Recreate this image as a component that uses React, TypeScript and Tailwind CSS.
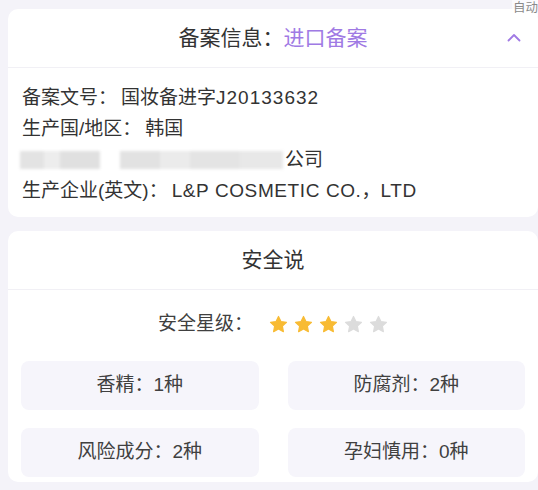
import React from "react";

const font = { fontFamily: '"Liberation Sans", "Noto Sans CJK SC", "Noto Sans", sans-serif' };

function Star({ on }: { on: boolean }) {
  return (
    <svg width="19" height="19" viewBox="0 0 24 24">
      <path
        d="M12 1.8l3.1 6.5 7 .9-5.2 4.9 1.3 7-6.2-3.4-6.2 3.4 1.3-7L1.9 9.2l7-.9z"
        fill={on ? "#f8bb34" : "#dcdcdc"}
        stroke={on ? "#f8bb34" : "#dcdcdc"}
        strokeWidth="1.5"
        strokeLinejoin="round"
      />
    </svg>
  );
}

function Box({ children }: { children: React.ReactNode }) {
  return (
    <div className="h-[49px] rounded-[8px] bg-[#f6f5fb] flex items-center justify-center text-[19px] text-[#404040]">
      {children}
    </div>
  );
}

function Colon() {
  return <span className="mr-[4px]">：</span>;
}

export default function App() {
  return (
    <div
      className="relative w-[538px] h-[490px] overflow-hidden bg-[#f4f3f9] pl-[8px] pt-[9px]"
      style={font}
    >
      <div className="absolute right-0 top-0 text-[12.5px] leading-[16px] text-[#8a8a8a] bg-white/60 pl-[1px]">
        自动
      </div>

      {/* Card 1 */}
      <div className="w-[530px] bg-white rounded-[10px]">
        <div className="h-[59px] border-b border-[#f1f0f5] grid grid-cols-[1fr_auto_1fr] items-center">
          <div />
          <div className="text-[21px] text-[#333333]">
            备案信息：<span className="text-[#a07ae4]">进口备案</span>
          </div>
          <div className="flex justify-end pr-[16px]">
            <svg width="16" height="16" viewBox="0 0 16 16">
              <path d="M2.5 10.5L8 5l5.5 5.5" fill="none" stroke="#a07ae4" strokeWidth="1.8" strokeLinecap="round" strokeLinejoin="round" />
            </svg>
          </div>
        </div>
        <div className="pl-[14px] pt-[14px] pb-[11px] text-[19px] leading-[31px] text-[#333333]">
          <div>
            备案文号<Colon />国妆备进字<span className="tracking-[1px]">J20133632</span>
          </div>
          <div>
            生产国/地区<Colon />韩国
          </div>
          <div className="flex items-center h-[31px]">
            <div className="flex items-center blur-[1.5px] ml-[-2px]">
              <div className="w-[24px] h-[18px] bg-[#e3e3e3]" />
              <div className="w-[16px] h-[18px] bg-[#ededed]" />
              <div className="w-[40px] h-[18px] bg-[#e0e0e0]" />
              <div className="w-[20px] h-[18px] bg-white" />
              <div className="w-[40px] h-[18px] bg-[#e2e2e2]" />
              <div className="w-[30px] h-[18px] bg-[#ebebeb]" />
              <div className="w-[50px] h-[18px] bg-[#e4e4e4]" />
              <div className="w-[43px] h-[18px] bg-[#e8e8e8]" />
            </div>
            <span className="ml-[2px]">公司</span>
          </div>
          <div>
            生产企业(英文)<Colon />
            <span className="tracking-[0.6px]">L&amp;P COSMETIC CO.</span>，<span className="tracking-[0.6px]">LTD</span>
          </div>
        </div>
      </div>

      {/* Card 2 */}
      <div className="w-[530px] mt-[14px] bg-white rounded-[10px] pb-[5px]">
        <div className="h-[59px] border-b border-[#f1f0f5] flex items-center justify-center text-[21px] text-[#333333]">
          安全说
        </div>
        <div className="mt-[19px] h-[30px] flex items-center justify-center text-[19px] text-[#404040]">
          <span>安全星级：</span>
          <div className="flex items-center gap-[6px] ml-[16px]">
            <Star on />
            <Star on />
            <Star on />
            <Star on={false} />
            <Star on={false} />
          </div>
        </div>
        <div className="px-[13px] mt-[22px] grid grid-cols-2 gap-x-[29px] gap-y-[18px]">
          <Box>香精：1种</Box>
          <Box>防腐剂：2种</Box>
          <Box>风险成分：2种</Box>
          <Box>孕妇慎用：0种</Box>
        </div>
      </div>
    </div>
  );
}
